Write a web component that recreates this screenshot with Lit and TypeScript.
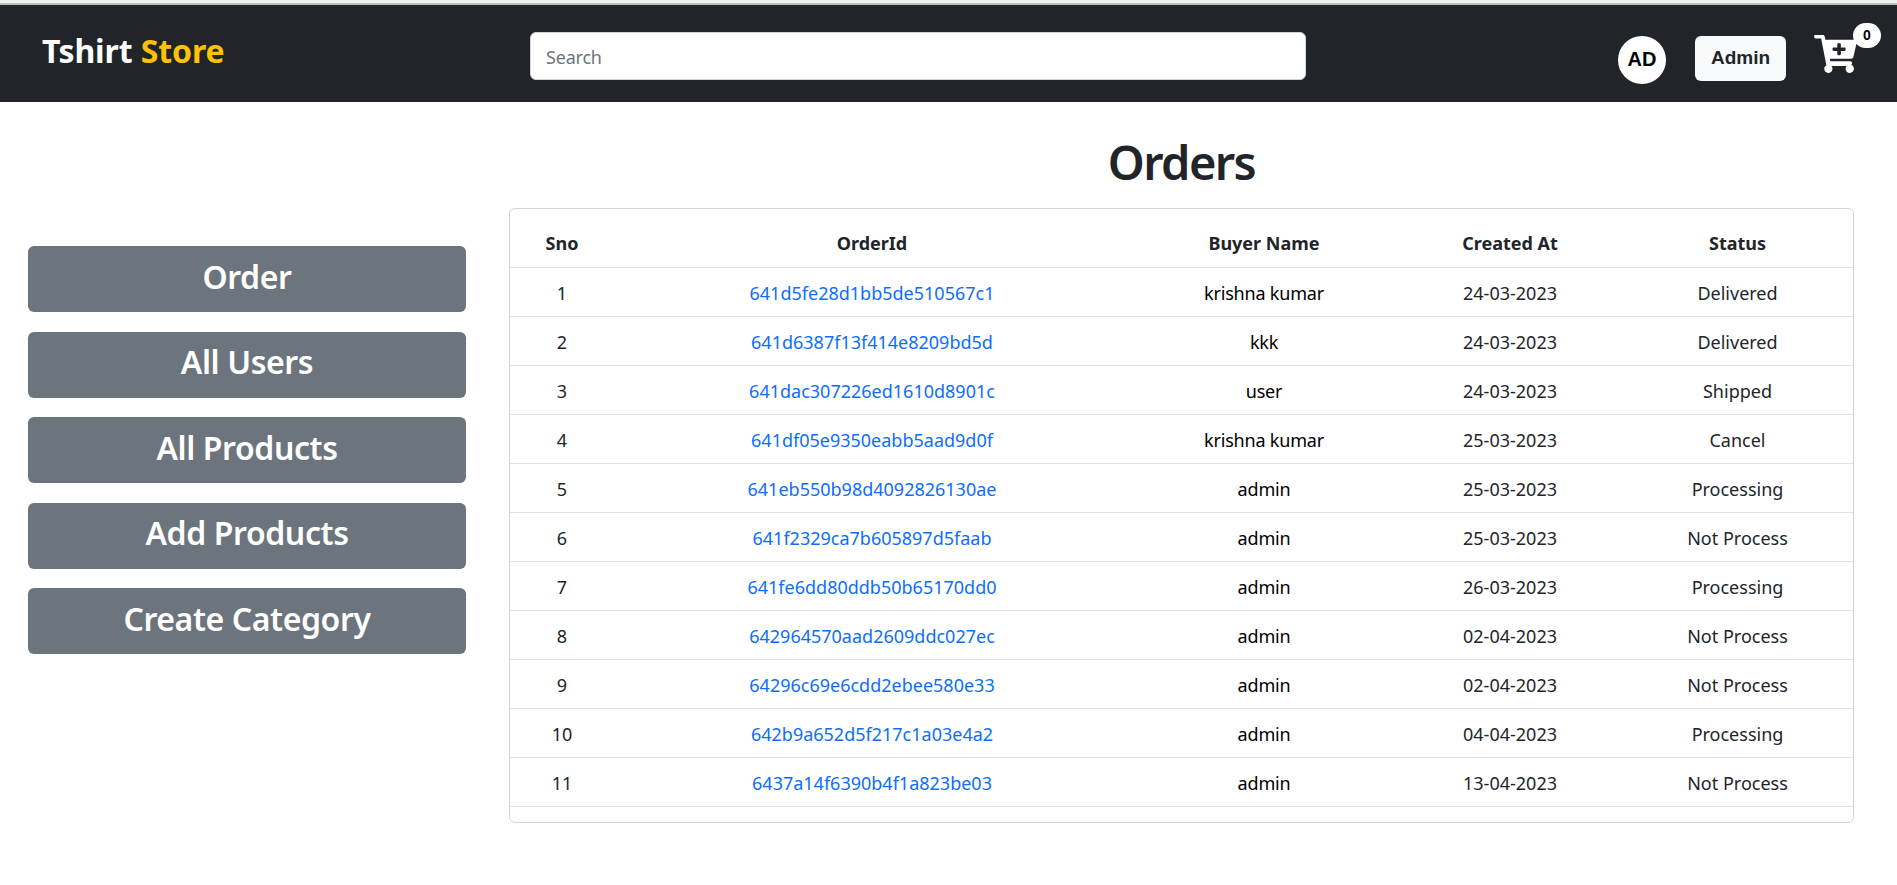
import { LitElement, html, css } from "lit";
import { customElement } from "lit/decorators.js";

const rows = [
  ["641d5fe28d1bb5de510567c1", "krishna kumar", "24-03-2023", "Delivered"],
  ["641d6387f13f414e8209bd5d", "kkk", "24-03-2023", "Delivered"],
  ["641dac307226ed1610d8901c", "user", "24-03-2023", "Shipped"],
  ["641df05e9350eabb5aad9d0f", "krishna kumar", "25-03-2023", "Cancel"],
  ["641eb550b98d4092826130ae", "admin", "25-03-2023", "Processing"],
  ["641f2329ca7b605897d5faab", "admin", "25-03-2023", "Not Process"],
  ["641fe6dd80ddb50b65170dd0", "admin", "26-03-2023", "Processing"],
  ["642964570aad2609ddc027ec", "admin", "02-04-2023", "Not Process"],
  ["64296c69e6cdd2ebee580e33", "admin", "02-04-2023", "Not Process"],
  ["642b9a652d5f217c1a03e4a2", "admin", "04-04-2023", "Processing"],
  ["6437a14f6390b4f1a823be03", "admin", "13-04-2023", "Not Process"],
];
const menu = ["Order", "All Users", "All Products", "Add Products", "Create Category"];

@customElement("app-root")
export class AppRoot extends LitElement {
  static styles = css`
    :host { display: block; width: 1897px; height: 885px; overflow: hidden; background: #fff; color: #212529;
      font-family: "Noto Sans", "Open Sans", sans-serif; font-size: 16px; }
    * { box-sizing: border-box; }
    .strip { height: 5px; background: linear-gradient(#f1f1f1 0 3px, #bdbdbd 3px 5px); }
    .nav { height: 97px; background: #212529; display: flex; align-items: center; position: relative; }
    .brand { margin-left: 42px; width: 488px; font-size: 32px; font-weight: 700; color: #fff; letter-spacing: -0.1px; padding-bottom: 6px; }
    .brand span { color: #ffc107; }
    .search { width: 776px; height: 48px; background: #fff; border: 1px solid #ced4da; border-radius: 6px;
      padding: 2px 15px 0; display: flex; align-items: center; color: #6c757d; font-size: 18px; letter-spacing: -0.2px; margin-top: 5px; }
    .right { margin-left: auto; display: flex; align-items: flex-start; margin-right: 40px; height: 48px; margin-top: 12px; }
    .avatar { width: 48px; height: 48px; border-radius: 50%; background: #fff; color: #000; display: flex; align-items: center; justify-content: center;
      font-family: "Liberation Sans", sans-serif; font-weight: 700; font-size: 20px; }
    .admin { margin-left: 29px; width: 91px; height: 45px; background: #f8f9fa; border-radius: 6px; display: flex; align-items: center; justify-content: center;
      font-family: "Liberation Sans", sans-serif; font-weight: 700; font-size: 19px; }
    .cart { margin-left: 28px; margin-top: -1px; width: 43px; height: 38px; position: relative; }
    .cart svg { display: block; width: 43px; height: 38px; fill: #fff; }
    .badge { position: absolute; left: 39px; top: -12px; width: 28px; height: 25px; border-radius: 13px; background: #fff; color: #000;
      font-family: "Liberation Sans", sans-serif; font-weight: 700; font-size: 14px; display: flex; align-items: center; justify-content: center; }
    .main { display: flex; align-items: flex-start; }
    .side { width: 509px; padding: 144px 43px 0 28px; display: flex; flex-direction: column; gap: 19.6px; }
    .btn { height: 66px; background: #6c757d; border-radius: 6px; color: #fff; font-size: 32px; font-weight: 600;
      display: flex; align-items: center; justify-content: center; padding-bottom: 6px; letter-spacing: -0.4px; }
    .content { width: 1345px; }
    h1 { margin: 0; height: 106px; padding-top: 31px; text-align: center; font-size: 47px; line-height: 58px; font-weight: 600; letter-spacing: -1.6px; }
    .card { border: 1px solid #d4d4d4; border-radius: 6px; height: 615px; }
    table { width: 100%; border-collapse: collapse; table-layout: fixed; font-size: 18px; }
    .c1 { width: 104px; } .c2 { width: 516px; } .c3 { width: 268px; } .c4 { width: 224px; } .c5 { width: auto; }
    th, td { text-align: center; border-bottom: 1px solid #dee2e6; padding: 0; height: 49px; }
    td { padding-top: 2px; }
    th { height: 58px; font-weight: 700; padding-top: 10px; }
    td a { color: #0d6efd; text-decoration: none; }
    .bn { color: #000; letter-spacing: -0.2px; }
  `;

  render() {
    return html`
      <div class="strip"></div>
      <nav class="nav">
        <div class="brand">Tshirt <span>Store</span></div>
        <div class="search">Search</div>
        <div class="right">
          <div class="avatar">AD</div>
          <div class="admin">Admin</div>
          <div class="cart">
            <svg viewBox="0 0 576 512"><path d="M504.7 320H211.6l6.5 32h268.4c15.4 0 26.8 14.3 23.4 29.3l-5.5 24.3C523.3 414.2 536 433.6 536 456c0 31.2-25.5 56.4-56.8 56-29.8-.4-54.4-24.6-55.2-54.4-.4-16.3 6.1-31.1 16.8-41.6H231.2c10.4 10.2 16.8 24.3 16.8 40 0 31.8-26.5 57.4-58.7 56-28.6-1.2-51.9-24.4-53.3-53-1.1-22.2 10.8-41.7 28.9-51.8L94.6 48H24C10.7 48 0 37.3 0 24V16C0 7.2 7.2 0 16 0h102.5c11.4 0 21.2 8 23.5 19.2L151.2 64H552c15.4 0 26.8 14.3 23.4 29.3l-47.3 208c-2.5 10.9-12.2 18.7-23.4 18.7z"/><path d="M408 168h-48v-40c0-8.8-7.2-16-16-16h-16c-8.8 0-16 7.2-16 16v40h-48c-8.8 0-16 7.2-16 16v16c0 8.8 7.2 16 16 16h48v40c0 8.8 7.2 16 16 16h16c8.8 0 16-7.2 16-16v-40h48c8.8 0 16-7.2 16-16v-16c0-8.8-7.2-16-16-16z" fill="#212529"/></svg>
            <div class="badge">0</div>
          </div>
        </div>
      </nav>
      <div class="main">
        <aside class="side">${menu.map((m) => html`<div class="btn">${m}</div>`)}</aside>
        <section class="content">
          <h1>Orders</h1>
          <div class="card">
            <table>
              <colgroup><col class="c1" /><col class="c2" /><col class="c3" /><col class="c4" /><col class="c5" /></colgroup>
              <thead><tr><th>Sno</th><th>OrderId</th><th>Buyer Name</th><th>Created At</th><th>Status</th></tr></thead>
              <tbody>
                ${rows.map((r, i) => html`<tr><td>${i + 1}</td><td><a>${r[0]}</a></td><td class="bn">${r[1]}</td><td>${r[2]}</td><td>${r[3]}</td></tr>`)}
              </tbody>
            </table>
          </div>
        </section>
      </div>
    `;
  }
}
